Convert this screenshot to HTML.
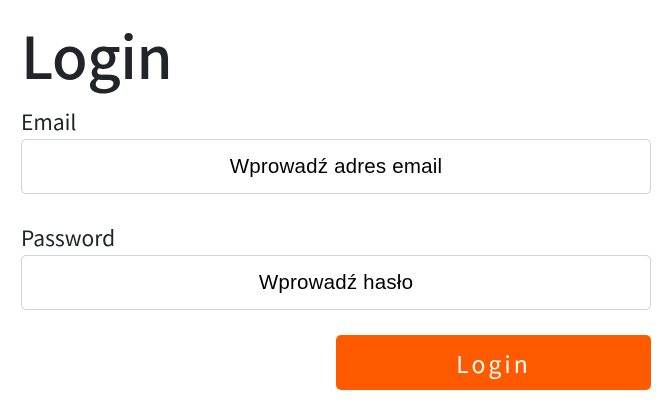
<!DOCTYPE html>
<html><head><meta charset="utf-8"><style>
body{margin:0;width:658px;height:405px;background:#fff;font-family:"Noto Sans CJK KR","Liberation Sans",sans-serif;overflow:hidden;position:relative}
.a{position:absolute;line-height:1;white-space:nowrap}
h1{position:absolute;left:21px;top:25px;margin:0;font-size:58px;font-weight:500;color:#212529;line-height:1;letter-spacing:-0.5px}
.lbl{font-size:21px;color:#212529;left:21px}
.inp{position:absolute;left:21px;width:628px;height:53px;border:1px solid #ced4da;border-radius:5px;display:flex;align-items:center;justify-content:center;font-size:20.5px;color:#000;font-family:"Liberation Sans",sans-serif;letter-spacing:0.2px}
.btn{position:absolute;left:336px;top:335px;width:315px;height:55px;background:#ff5a00;border-radius:5px;color:#fff;font-size:23px;letter-spacing:3px;display:flex;align-items:center;justify-content:center}
</style></head><body>
<h1>Login</h1>
<div class="a lbl" style="top:112px">Email</div>
<div class="inp" style="top:139px">Wprowadź adres email</div>
<div class="a lbl" style="top:228px">Password</div>
<div class="inp" style="top:255px">Wprowadź hasło</div>
<div class="btn">Login</div>
</body></html>
